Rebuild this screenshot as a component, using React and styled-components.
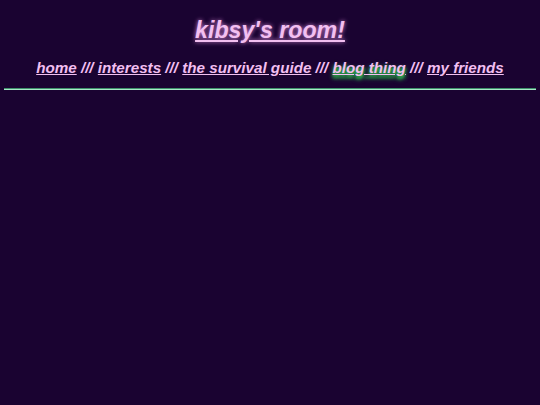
import React from 'react';
import styled, { createGlobalStyle } from 'styled-components';

const GlobalStyle = createGlobalStyle`
  html, body { background-color: #1a0331; }
  body {
    margin: 0;
    padding: 0 4px;
    font-family: "Liberation Sans", Arial, sans-serif;
  }
`;

const Header = styled.header`
  display: flex;
  flex-direction: column;
  align-items: center;
  padding-top: 16px;
`;

const Title = styled.a`
  font-size: 23.2px;
  font-weight: bold;
  font-style: italic;
  color: #f2bff0;
  text-decoration: underline;
  text-shadow: 0 0 4px #d88ad8;
  line-height: 28px;
`;

const Nav = styled.nav`
  margin-top: 14px;
  font-size: 15.2px;
  font-weight: bold;
  font-style: italic;
  color: #f2bff0;
  line-height: 20px;
`;

const NavLink = styled.a`
  color: #f2bff0;
  text-decoration: underline;
  text-shadow: ${(p) =>
    p.$active ? '0 3px 3px #2fc050, 0 3px 5px #2fc050' : 'none'};
`;

const Rule = styled.hr`
  margin: 10px 0 0;
  border: none;
  height: 2px;
  background: linear-gradient(#3f8f6a 0 1px, #a6e8c8 1px 2px);
`;

const links = ['home', 'interests', 'the survival guide', 'blog thing', 'my friends'];

export default function App() {
  return (
    <>
      <GlobalStyle />
      <Header>
        <Title>kibsy's room!</Title>
        <Nav>
          {links.map((l, i) => (
            <React.Fragment key={l}>
              {i > 0 && ' /// '}
              <NavLink $active={l === 'blog thing'}>{l}</NavLink>
            </React.Fragment>
          ))}
        </Nav>
      </Header>
      <Rule />
    </>
  );
}
